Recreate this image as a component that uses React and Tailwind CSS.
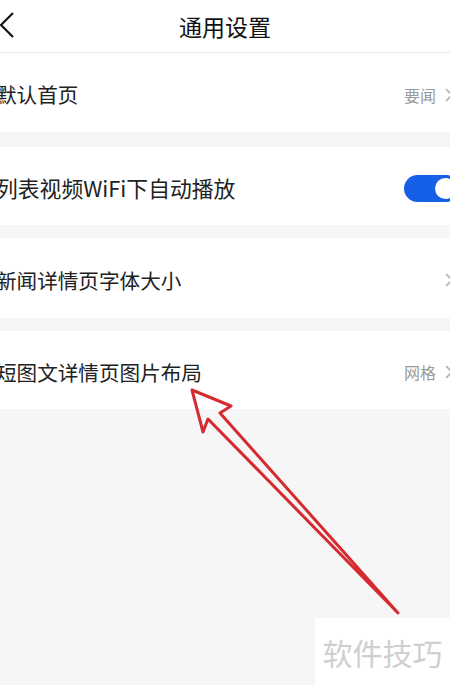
import React from "react";

const font = { fontFamily: '"Noto Sans CJK SC", "Noto Sans", sans-serif' };

function Chevron() {
  return (
    <svg width="10" height="16" viewBox="0 0 10 16" className="shrink-0">
      <path d="M2 2 L8 8 L2 14" fill="none" stroke="#b0b0b0" strokeWidth="1.6" />
    </svg>
  );
}

function Row({ label, value, children, h, size = "text-[20.6px]" }) {
  return (
    <div className={`flex items-center justify-between bg-white pt-[4px] ${h}`}>
      <span className={`ml-[-4px] ${size} leading-none text-[#222]`}>{label}</span>
      {children ? (
        children
      ) : (
        <div className="flex items-center gap-[8px] mr-[-4px]">
          {value && <span className="text-[16px] leading-none text-[#9a9a9a]">{value}</span>}
          <Chevron />
        </div>
      )}
    </div>
  );
}

export default function App() {
  return (
    <div className="relative w-[450px] h-[685px] overflow-hidden bg-[#f6f6f6] flex flex-col" style={font}>
      <div className="h-[53px] bg-white flex items-center justify-center relative border-b border-[#e8e8e8]">
        <svg width="16" height="26" viewBox="0 0 16 26" className="absolute left-0 top-[12px]">
          <path d="M13 1 L1 13 L13 25" fill="none" stroke="#111" strokeWidth="2.2" />
        </svg>
        <span className="text-[23px] text-[#111] leading-none">通用设置</span>
      </div>
      <Row label="默认首页" value="要闻" h="h-[79px]" />
      <div className="h-[15px]" />
      <Row label="列表视频WiFi下自动播放" h="h-[78px]" size="text-[21.8px]">
        <div className="w-[56px] h-[27px] rounded-full bg-[#1560e6] flex items-center justify-end pr-[4px] mr-[-10px]">
          <div className="w-[21px] h-[21px] rounded-full bg-white" />
        </div>
      </Row>
      <div className="h-[13px]" />
      <Row label="新闻详情页字体大小" h="h-[80px]" />
      <div className="h-[13px]" />
      <Row label="短图文详情页图片布局" value="网格" h="h-[78px]" />
      <div className="flex-1" />
      <div className="self-end w-[135px] h-[67px] bg-white flex items-center justify-center">
        <span className="text-[30px] text-[#cfcfcf] leading-none">软件技巧</span>
      </div>
      <svg className="absolute left-0 top-0 pointer-events-none" width="450" height="685" viewBox="0 0 450 685">
        <polygon
          points="192,390 231,406 220,413 398,613 208,419 203,432"
          fill="none"
          stroke="#d42a30"
          strokeWidth="3"
          strokeLinejoin="round"
        />
      </svg>
    </div>
  );
}
